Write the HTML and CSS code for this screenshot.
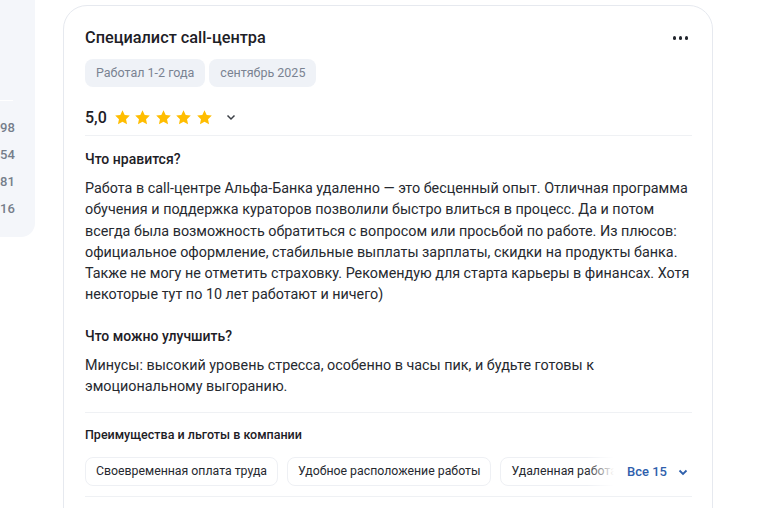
FILE: index.html
```html
<!DOCTYPE html>
<html lang="ru">
<head>
    <meta charset="UTF-8">
    <meta name="viewport" content="width=device-width, initial-scale=1.0">
    <title>Отзыв</title>
    <link rel="stylesheet" href="styles.css">
</head>
<body>
    <div class="page">
        <aside class="sidebar">
            <div class="sidebar-line"></div>
            <ul class="counts">
                <li>98</li>
                <li>54</li>
                <li>81</li>
                <li>16</li>
            </ul>
        </aside>
        <article class="review">
            <header class="review-head">
                <h2 class="review-title">Специалист call-центра</h2>
                <button class="more" aria-label="Ещё">
                    <span></span><span></span><span></span>
                </button>
            </header>
            <div class="tags">
                <span class="tag">Работал 1-2 года</span>
                <span class="tag">сентябрь 2025</span>
            </div>
            <div class="rating">
                <span class="score">5,0</span>
                <div class="stars">
                    <svg viewBox="0 0 24 24"><path d="M12 1.8l3.1 6.6 7.2.9-5.3 5 1.4 7.1L12 17.9l-6.4 3.5 1.4-7.1-5.3-5 7.2-.9z"/></svg>
                    <svg viewBox="0 0 24 24"><path d="M12 1.8l3.1 6.6 7.2.9-5.3 5 1.4 7.1L12 17.9l-6.4 3.5 1.4-7.1-5.3-5 7.2-.9z"/></svg>
                    <svg viewBox="0 0 24 24"><path d="M12 1.8l3.1 6.6 7.2.9-5.3 5 1.4 7.1L12 17.9l-6.4 3.5 1.4-7.1-5.3-5 7.2-.9z"/></svg>
                    <svg viewBox="0 0 24 24"><path d="M12 1.8l3.1 6.6 7.2.9-5.3 5 1.4 7.1L12 17.9l-6.4 3.5 1.4-7.1-5.3-5 7.2-.9z"/></svg>
                    <svg viewBox="0 0 24 24"><path d="M12 1.8l3.1 6.6 7.2.9-5.3 5 1.4 7.1L12 17.9l-6.4 3.5 1.4-7.1-5.3-5 7.2-.9z"/></svg>
                </div>
                <svg class="chevron" viewBox="0 0 12 12"><path d="M2.5 4.5L6 8l3.5-3.5"/></svg>
            </div>
            <section class="block">
                <h3 class="block-title">Что нравится?</h3>
                <p class="block-text">Работа в call-центре Альфа-Банка удаленно — это бесценный опыт. Отличная программа обучения и поддержка кураторов позволили быстро влиться в процесс. Да и потом всегда была возможность обратиться с вопросом или просьбой по работе. Из плюсов: официальное оформление, стабильные выплаты зарплаты, скидки на продукты банка. Также не могу не отметить страховку. Рекомендую для старта карьеры в финансах. Хотя некоторые тут по 10 лет работают и ничего)</p>
                <h3 class="block-title second">Что можно улучшить?</h3>
                <p class="block-text">Минусы: высокий уровень стресса, особенно в часы пик, и будьте готовы к эмоциональному выгоранию.</p>
            </section>
            <section class="benefits">
                <h4 class="benefits-title">Преимущества и льготы в компании</h4>
                <div class="benefits-row">
                    <div class="benefits-list">
                        <span class="benefit">Своевременная оплата труда</span>
                        <span class="benefit">Удобное расположение работы</span>
                        <span class="benefit">Удаленная работа</span>
                    </div>
                    <button class="show-all">Все 15
                        <svg viewBox="0 0 12 12"><path d="M2.5 4.5L6 8l3.5-3.5"/></svg>
                    </button>
                </div>
            </section>
        </article>
    </div>
</body>
</html>
```

FILE: styles.css
```css
* {
    box-sizing: border-box;
}
body {
    margin: 0;
    background: #fff;
    font-family: Roboto, "Noto Sans", Arial, sans-serif;
    color: #1d2026;
    overflow: hidden;
}
.page {
    display: flex;
    align-items: flex-start;
    height: 508px;
    overflow: hidden;
}
.sidebar {
    width: 35px;
    height: 237px;
    flex-shrink: 0;
    background: #f4f6fa;
    border-radius: 0 0 14px 0;
    overflow: hidden;
    padding-top: 100px;
}
.sidebar-line {
    width: 13px;
    height: 1px;
    background: #fff;
}
.counts {
    list-style: none;
    margin: 0;
    padding: 18px 21px 0 0;
    text-align: right;
    font-size: 13px;
    font-weight: 500;
    color: #767e8b;
}
.counts li {
    line-height: 18px;
    margin-bottom: 9px;
}
.review {
    margin: 5px 0 0 28px;
    width: 650px;
    height: 540px;
    flex-shrink: 0;
    border: 1px solid #e6e9ef;
    border-radius: 24px;
    padding: 20px 20px 0 21px;
    background: #fff;
}
.review-head {
    display: flex;
    justify-content: space-between;
    align-items: center;
}
.review-title {
    margin: 0;
    font-size: 16.3px;
    font-weight: 500;
    line-height: 24px;
}
.more {
    display: flex;
    gap: 2.5px;
    border: none;
    background: none;
    padding: 0;
    margin-right: 4px;
}
.more span {
    width: 3.5px;
    height: 3.5px;
    border-radius: 50%;
    background: #22262d;
}
.tags {
    display: flex;
    gap: 4px;
    margin-top: 9px;
}
.tag {
    background: #eff2f7;
    border-radius: 8px;
    padding: 0 11px;
    height: 28px;
    line-height: 28px;
    font-size: 12.5px;
    color: #7a8392;
}
.rating {
    display: flex;
    align-items: center;
    margin-top: 18px;
    height: 24px;
}
.score {
    font-size: 16px;
    font-weight: 500;
    margin-right: 7px;
}
.stars {
    display: flex;
    gap: 3.5px;
}
.stars svg {
    width: 17px;
    height: 17px;
    fill: #ffbd00;
}
.chevron {
    width: 12px;
    height: 12px;
    margin-left: 12px;
    fill: none;
    stroke: #3b3f46;
    stroke-width: 1.5;
}
.block {
    margin-top: 6px;
    border-top: 1px solid #eff1f4;
    padding: 13px 0 15px;
}
.block-title {
    margin: 0;
    font-size: 14px;
    font-weight: 500;
    line-height: 20px;
}
.block-title.second {
    margin-top: 20px;
}
.block-text {
    margin: 9px 0 0;
    font-size: 14.35px;
    line-height: 21.3px;
    color: #26292f;
}
.benefits {
    border-top: 1px solid #eff1f4;
    border-bottom: 1px solid #eff1f4;
    padding: 13px 0 10px;
}
.benefits-title {
    margin: 0;
    font-size: 12.5px;
    font-weight: 500;
    line-height: 18px;
}
.benefits-row {
    display: flex;
    align-items: center;
    margin-top: 13px;
}
.benefits-list {
    position: relative;
    display: flex;
    gap: 9px;
    width: 532px;
    overflow: hidden;
    flex-shrink: 0;
}
.benefits-list::after {
    content: "";
    position: absolute;
    top: 0;
    right: 0;
    width: 30px;
    height: 100%;
    background: linear-gradient(to right, rgba(255, 255, 255, 0), #fff 90%);
}
.benefit {
    flex-shrink: 0;
    height: 29px;
    line-height: 27px;
    padding: 0 10px;
    border: 1px solid #eef0f4;
    border-radius: 8px;
    font-size: 12.3px;
    color: #26292f;
    white-space: nowrap;
}
.show-all {
    display: flex;
    align-items: center;
    gap: 10px;
    border: none;
    background: none;
    padding: 0 0 0 10px;
    font-family: inherit;
    font-size: 13px;
    font-weight: 500;
    color: #2f60ac;
}
.show-all svg {
    width: 12px;
    height: 12px;
    fill: none;
    stroke: #2f60ac;
    stroke-width: 1.8;
}
```
